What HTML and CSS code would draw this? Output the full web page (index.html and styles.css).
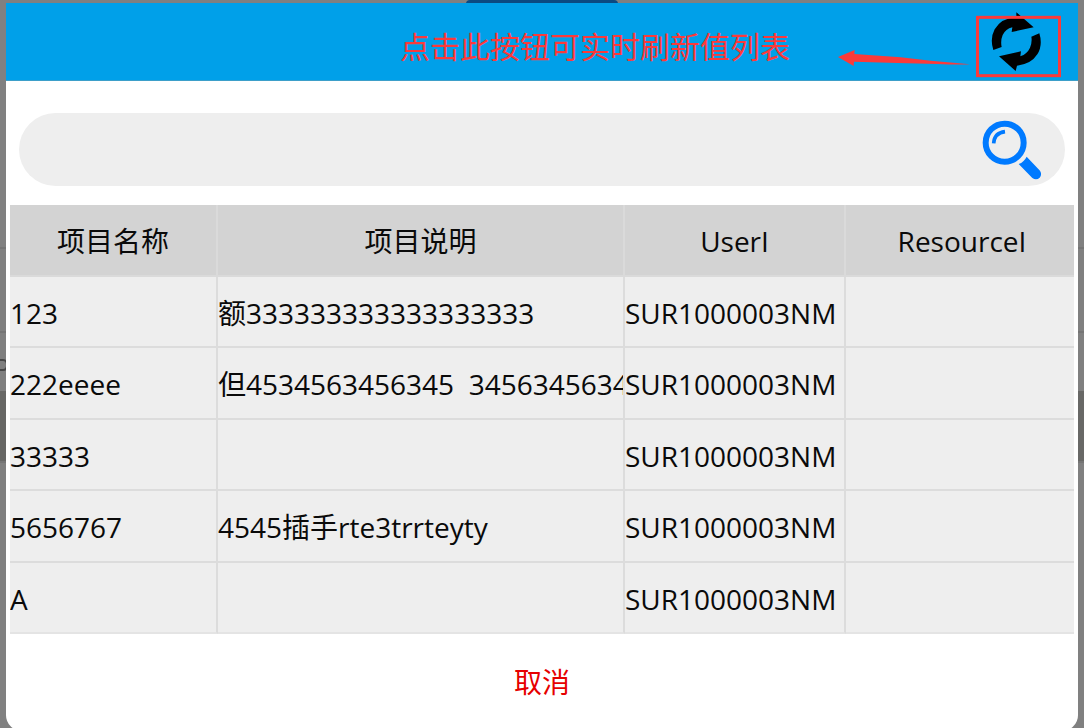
FILE: index.html
```html
<!DOCTYPE html>
<html lang="zh-CN">
<head>
<meta charset="utf-8">
<meta name="viewport" content="width=device-width, initial-scale=1">
<title>值列表</title>
<link rel="stylesheet" href="styles.css">
</head>
<body>
<div class="backdrop" aria-hidden="true">
  <div class="backdrop-tab"></div>
  <div class="backdrop-row backdrop-row-first"></div>
  <div class="backdrop-row"></div>
  <div class="backdrop-row backdrop-row-label">
    <svg width="8" height="16" viewBox="0 0 8 16"><path d="M0 3H3Q7 3 7 8Q7 13 3 13H0" fill="none" stroke="#484848" stroke-width="2"/></svg>
  </div>
  <div class="backdrop-row backdrop-row-dark"></div>
</div>
<main class="dialog">
  <header class="dialog-header">
    <span class="hint">点击此按钮可实时刷新值列表</span>
    <svg class="hint-arrow" viewBox="52 150 396 48" aria-hidden="true">
      <path d="M52 171L102 150L101 162L240 172L330 182L448 193Q410 195 350 192L230 189L100 185L99 198Z" fill="#fb3a3a"/>
    </svg>
    <button class="refresh" type="button" aria-label="刷新">
      <svg viewBox="468 36 255 198" aria-hidden="true">
        <path d="M520 150Q509 116 524 88Q544 54 589 52V37L641 82L575 96L577 82Q557 87 548 105Q541 122 545 141Z"/>
        <path d="M658 100Q669 135 652 163Q633 193 591 197L587 213L537 169L603 154L601 169Q622 161 630 143Q637 126 634 110Z"/>
        <rect x="472.500" y="52" width="246" height="175" fill="none" stroke="#fb3a3a" stroke-width="9"/>
      </svg>
    </button>
  </header>
  <form class="search">
    <input class="search-input" type="text" aria-label="搜索">
    <button class="search-button" type="button" aria-label="搜索">
      <svg viewBox="66 58 180 180" aria-hidden="true">
        <circle cx="134" cy="126" r="57" fill="none" stroke="#007aff" stroke-width="18"/>
        <path d="M101 128Q103 97 135 93" fill="none" stroke="#007aff" stroke-width="11"/>
        <path d="M200 168L240 210Q247 222 239 231Q229 240 217 232L176 190Q192 184 200 168Z" fill="#007aff"/>
      </svg>
    </button>
  </form>
  <div class="table-wrap">
    <table class="values">
      <colgroup><col class="col-name"><col class="col-desc"><col class="col-user"><col></colgroup>
      <thead>
        <tr><th>项目名称</th><th>项目说明</th><th>UserI</th><th>ResourceI</th></tr>
      </thead>
      <tbody>
        <tr><td>123</td><td>额333333333333333333</td><td>SUR1000003NM</td><td></td></tr>
        <tr><td>222eeee</td><td>但4534563456345  3456345634</td><td>SUR1000003NM</td><td></td></tr>
        <tr><td>33333</td><td></td><td>SUR1000003NM</td><td></td></tr>
        <tr><td>5656767</td><td>4545插手rte3trrteyty</td><td>SUR1000003NM</td><td></td></tr>
        <tr><td>A</td><td></td><td>SUR1000003NM</td><td></td></tr>
      </tbody>
    </table>
  </div>
  <button class="cancel" type="button">取消</button>
</main>
</body>
</html>
```
FILE: styles.css
```css
* {
  box-sizing: border-box;
}

body {
  margin: 0;
  height: 100vh;
  overflow: hidden;
  background: #808080;
  font-family: "Open Sans", "Noto Sans CJK SC", sans-serif;
  font-size: 28px;
  line-height: 40px;
  color: #0a0a0a;
}

button {
  padding: 0;
  border: 0;
  background: none;
  font: inherit;
  cursor: pointer;
}

svg {
  display: block;
}

/* Dimmed page behind the dialog */
.backdrop {
  position: absolute;
  inset: 0;
  z-index: -1;
}

.backdrop-tab {
  width: 152px;
  height: 12px;
  margin: 0 auto;
  border-radius: 4px;
  background: #0b4a82;
}

.backdrop-row {
  height: 84px;
  border-bottom: 2px solid #757575;
}

.backdrop-row-first {
  height: 237px;
}

.backdrop-row-label {
  height: 58px;
  padding-top: 24px;
  border: 0;
}

.backdrop-row-dark {
  height: 72px;
  background: #686866;
}

.dialog {
  display: flex;
  flex-direction: column;
  min-height: 100vh;
  margin: 3px 6px 0;
  border-radius: 0 0 16px 16px;
  overflow: hidden;
  background: #fff;
}

.dialog-header {
  display: flex;
  justify-content: flex-end;
  align-items: center;
  height: 78px;
  padding: 6px 17px 0 0;
  border-bottom: 1px solid #3d9fc9;
  background: #00a0e9;
}

.hint {
  margin-right: 48px;
  padding-top: 4px;
  font-size: 30px;
  white-space: nowrap;
  color: #fb3a3a;
}

.hint-arrow {
  width: 132px;
  height: 16px;
  margin: 26px 6px 0 0;
}

.refresh svg {
  width: 85px;
  height: 66px;
}

.search {
  display: flex;
  align-items: center;
  height: 73px;
  margin: 32px 13px 19px;
  padding-right: 23px;
  border-radius: 37px;
  background: #eee;
}

.search-input {
  flex: 1;
  min-width: 0;
  height: 100%;
  padding: 0 32px;
  border: 0;
  outline: 0;
  background: transparent;
  font: inherit;
}

.search-button svg {
  width: 60px;
  height: 60px;
}

.table-wrap {
  margin: 0 4px;
  overflow: hidden;
}

.values {
  width: calc(100% + 6px);
  table-layout: fixed;
  border-spacing: 0;
}

.col-name {
  width: 208px;
}

.col-desc {
  width: 407px;
}

.col-user {
  width: 221px;
}

.values th,
.values td {
  height: 71px;
  padding: 2px 0 0;
  border: solid #dcdcdc;
  border-width: 0 2px 2px 0;
  overflow: hidden;
  white-space: pre;
}

.values th {
  height: 72px;
  border-color: #dadada;
  background: #d3d3d3;
  font-weight: 400;
}

.values td {
  background: #eee;
}

.values tr:nth-child(even) td {
  height: 72px;
}

.values tr:last-child td {
  border-bottom-color: #e4e4e4;
}

.cancel {
  align-self: center;
  width: 100%;
  height: 96px;
  color: #e60000;
}
```
